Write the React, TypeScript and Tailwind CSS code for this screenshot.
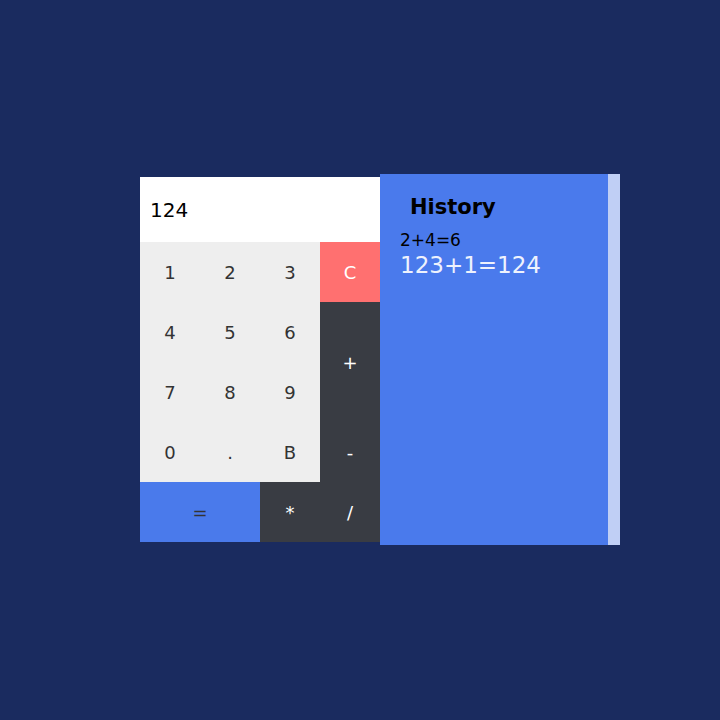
const keyBase = "flex items-center justify-center";

export default function App() {
  return (
    <main
      className="w-[720px] h-[720px] bg-[#1a2b5f] flex items-center justify-center pl-[40px] pb-[1px]"
      style={{ fontFamily: '"DejaVu Sans", sans-serif' }}
    >
      {/* Calculator */}
      <div className="w-[240px] flex flex-col">
        <div className="h-[65px] bg-white flex items-center px-[10px] text-[20px] text-black">124</div>
        <div className="grid grid-cols-[repeat(4,60px)] grid-rows-[repeat(5,60px)] text-[18px]">
          <div className={`${keyBase} bg-[#eeeeee] text-[#333333]`}>1</div>
          <div className={`${keyBase} bg-[#eeeeee] text-[#333333]`}>2</div>
          <div className={`${keyBase} bg-[#eeeeee] text-[#333333]`}>3</div>
          <div className={`${keyBase} bg-[#ff7070] text-white`}>C</div>
          <div className={`${keyBase} bg-[#eeeeee] text-[#333333]`}>4</div>
          <div className={`${keyBase} bg-[#eeeeee] text-[#333333]`}>5</div>
          <div className={`${keyBase} bg-[#eeeeee] text-[#333333]`}>6</div>
          <div className={`${keyBase} row-span-2 bg-[#393c43] text-white`}>+</div>
          <div className={`${keyBase} bg-[#eeeeee] text-[#333333]`}>7</div>
          <div className={`${keyBase} bg-[#eeeeee] text-[#333333]`}>8</div>
          <div className={`${keyBase} bg-[#eeeeee] text-[#333333]`}>9</div>
          <div className={`${keyBase} bg-[#eeeeee] text-[#333333]`}>0</div>
          <div className={`${keyBase} bg-[#eeeeee] text-[#333333]`}>.</div>
          <div className={`${keyBase} bg-[#eeeeee] text-[#333333]`}>B</div>
          <div className={`${keyBase} bg-[#393c43] text-white`}>-</div>
          <div className={`${keyBase} col-span-2 bg-[#4a7aeb] text-[#333333]`}>=</div>
          <div className={`${keyBase} bg-[#393c43] text-white`}>*</div>
          <div className={`${keyBase} bg-[#393c43] text-white`}>/</div>
        </div>
      </div>

      {/* History */}
      <div className="w-[240px] h-[371px] bg-[#4a7aec] flex">
        <div className="flex-1 pt-[18px] pl-[20px]">
          <h2 className="text-[21px] font-bold text-black pl-[10px] mb-[6px]">History</h2>
          <p className="text-[17px] text-black leading-tight">2+4=6</p>
          <p className="text-[23px] text-[#eef2fd] leading-tight">123+1=124</p>
        </div>
        <div className="w-[12px] bg-[#c0cff5]" />
      </div>
    </main>
  );
}
